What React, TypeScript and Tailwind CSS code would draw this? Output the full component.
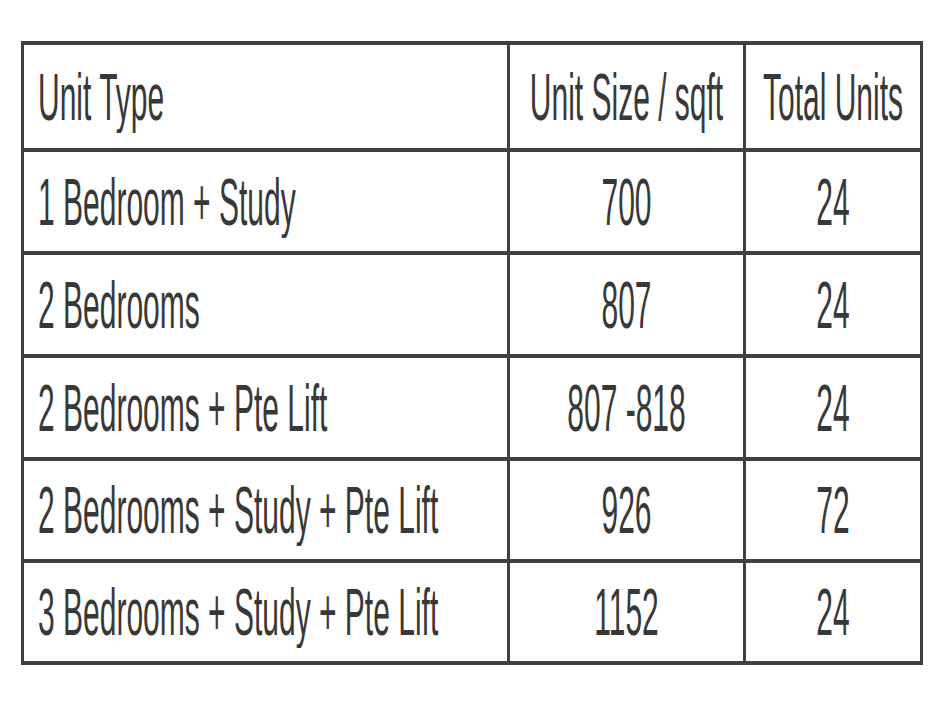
import React from "react";

const rows: [string, string, string][] = [
  ["1 Bedroom + Study", "700", "24"],
  ["2 Bedrooms", "807", "24"],
  ["2 Bedrooms + Pte Lift", "807 -818", "24"],
  ["2 Bedrooms + Study + Pte Lift", "926", "72"],
  ["3 Bedrooms + Study + Pte Lift", "1152", "24"],
];

function T({ children }: { children: React.ReactNode }) {
  return (
    <span className="inline-block leading-none whitespace-pre scale-y-[2.25] origin-center">
      {children}
    </span>
  );
}

export default function App() {
  const cell = "bg-white flex items-center text-[30px] text-[#383838]";
  return (
    <div
      className="w-[943px] h-[717px] bg-white pt-[41px] pl-[21px]"
      style={{ fontFamily: '"Liberation Sans", Arial, sans-serif' }}
    >
      <div className="w-[902px] grid grid-cols-[483px_233px_174px] grid-rows-[103px_99px_99px_99px_98px_98px] gap-x-[3px] gap-y-[4px] px-[3px] py-[4px] bg-[#404040]">
        <div className={`${cell} pl-[14px]`}>
          <T>Unit Type</T>
        </div>
        <div className={`${cell} justify-center`}>
          <T>Unit Size / sqft</T>
        </div>
        <div className={`${cell} justify-center`}>
          <T>Total Units</T>
        </div>
        {rows.map((r, i) => (
          <React.Fragment key={i}>
            <div className={`${cell} pl-[14px]`}>
              <T>{r[0]}</T>
            </div>
            <div className={`${cell} justify-center`}>
              <T>{r[1]}</T>
            </div>
            <div className={`${cell} justify-center`}>
              <T>{r[2]}</T>
            </div>
          </React.Fragment>
        ))}
      </div>
    </div>
  );
}
